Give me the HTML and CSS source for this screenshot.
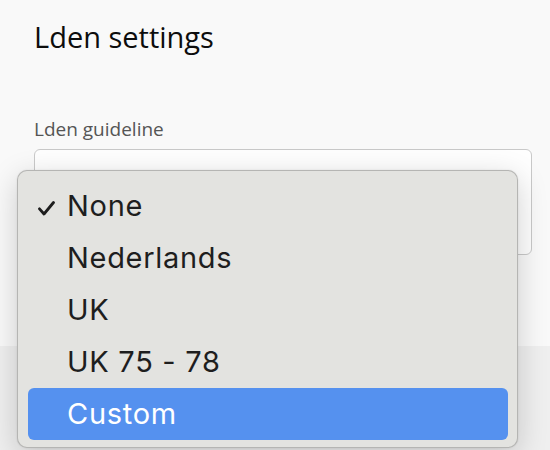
FILE: index.html
```html
<!DOCTYPE html>
<html lang="en">
<head>
<meta charset="utf-8">
<title>Lden settings</title>
<link rel="stylesheet" href="styles.css">
</head>
<body>
<main class="panel">
  <h1 class="title">Lden settings</h1>
  <label class="field-label">Lden guideline</label>
  <div class="select-box"></div>
</main>
<footer class="footer"></footer>
<ul class="menu">
  <li class="menu-item"><span class="check"><svg width="17" height="15" viewBox="0 0 17 15"><path d="M1.5 7.8 L6 13 L15.5 1.5" fill="none" stroke="#1e1e1e" stroke-width="2.8" stroke-linecap="round" stroke-linejoin="round"/></svg></span><span class="item-text">None</span></li>
  <li class="menu-item"><span class="check"></span><span class="item-text">Nederlands</span></li>
  <li class="menu-item"><span class="check"></span><span class="item-text">UK</span></li>
  <li class="menu-item"><span class="check"></span><span class="item-text">UK 75 - 78</span></li>
  <li class="menu-item is-active"><span class="check"></span><span class="item-text">Custom</span></li>
</ul>
</body>
</html>
```
FILE: styles.css
```css
* { box-sizing: border-box; }
html, body { height: 100%; }
body {
  margin: 0;
  background: #efefef;
  font-family: "Open Sans", "Noto Sans", sans-serif;
  display: flex;
  flex-direction: column;
  overflow: hidden;
}
.panel {
  background: #f9f9f9;
  padding: 20px 18px 91px 34px;
  display: flex;
  flex-direction: column;
}
.title {
  margin: 0;
  font-size: 29px;
  line-height: 34px;
  font-weight: 500;
  color: #0d0d0d;
}
.field-label {
  margin-top: 63px;
  font-size: 19px;
  line-height: 24px;
  color: #555;
}
.select-box {
  margin-top: 8px;
  height: 106px;
  border: 1px solid #c9c9c9;
  border-radius: 6px;
  background: #fefefe;
}
.footer {
  flex: 1;
  background: #efefef;
}
.menu {
  position: absolute;
  left: 17px;
  top: 170px;
  width: 501px;
  height: 278px;
  margin: 0;
  padding: 9px 9px 7px 10px;
  list-style: none;
  background: #e3e3e0;
  border: 1px solid rgba(0,0,0,0.2);
  border-radius: 10px;
  box-shadow: 0 8px 30px rgba(0,0,0,0.18), 0 0 2px rgba(0,0,0,0.1);
  font-family: Inter, "Liberation Sans", sans-serif;
}
.menu-item {
  display: flex;
  align-items: center;
  height: 52px;
  border-radius: 6px;
  color: #1e1e1e;
  font-size: 29px;
  letter-spacing: 0.7px;
}
.check {
  width: 39px;
  flex: none;
  display: flex;
  align-items: center;
  padding-left: 10px;
  padding-top: 4px;
}
.item-text {
  line-height: 52px;
}
.is-active {
  background: #5591ef;
  color: #fff;
}
```
